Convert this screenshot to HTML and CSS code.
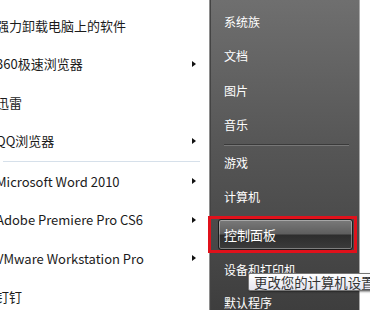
FILE: index.html
```html
<!DOCTYPE html>
<html>
<head>
    <title>开始菜单</title>
    <link rel="stylesheet" href="styles.css">
</head>
<body>
    <div class="start-menu">
        <div class="programs">
            <div class="prog-item"><span>强力卸载电脑上的软件</span></div>
            <div class="prog-item"><span>360极速浏览器</span><i class="arrow"></i></div>
            <div class="prog-item"><span>迅雷</span></div>
            <div class="prog-item"><span>QQ浏览器</span><i class="arrow"></i></div>
            <div class="prog-sep"></div>
            <div class="prog-item"><span>Microsoft Word 2010</span><i class="arrow"></i></div>
            <div class="prog-item"><span>Adobe Premiere Pro CS6</span><i class="arrow"></i></div>
            <div class="prog-item"><span>VMware Workstation Pro</span><i class="arrow"></i></div>
            <div class="prog-item"><span>钉钉</span></div>
        </div>

        <div class="places">
            <div class="place">系统族</div>
            <div class="place">文档</div>
            <div class="place">图片</div>
            <div class="place">音乐</div>
            <div class="place-sep"></div>
            <div class="place place-b">游戏</div>
            <div class="place place-b">计算机</div>
            <div class="mark">
                <div class="place-active">控制面板</div>
            </div>
            <div class="place place-c">设备和打印机</div>
            <div class="place place-c">默认程序</div>

            <div class="tooltip">更改您的计算机设置</div>
        </div>
    </div>
</body>
</html>
```

FILE: styles.css
```css
body {
    margin: 0;
    width: 370px;
    height: 310px;
    overflow: hidden;
    background-color: white;
    font-family: "Noto Sans CJK SC", "Microsoft YaHei", sans-serif;
    font-size: 12px;
}

.start-menu {
    display: flex;
    height: 310px;
}

/* left column: program list */
.programs {
    width: 209px;
    padding-top: 6px;
    box-sizing: border-box;
    background-color: white;
    color: #1b1b1b;
    font-size: 13px;
}

.prog-item {
    height: 38.5px;
    display: flex;
    align-items: center;
    justify-content: space-between;
    padding-right: 13px;
    margin-left: -4px;
    white-space: nowrap;
}

.arrow {
    width: 0;
    height: 0;
    border-left: 4px solid #111;
    border-top: 3.5px solid transparent;
    border-bottom: 3.5px solid transparent;
}

.prog-sep {
    height: 1px;
    margin: 1px 9px 0 3px;
    background-color: #d6e0ea;
}

/* right column: places */
.places {
    position: relative;
    width: 151px;
    padding-top: 4px;
    box-sizing: border-box;
    background: linear-gradient(#6f6f6f, #575757 45%, #3e3e3e);
    border-left: 1px solid #8e8e8e;
    border-right: 1px solid #a9a9a9;
    box-shadow: inset 1px 0 #434343;
    color: #ffffff;
}

.place {
    height: 34.5px;
    display: flex;
    align-items: center;
    padding-left: 14px;
    white-space: nowrap;
}

.place-c {
    height: 33px;
}

.place-sep {
    height: 1px;
    margin: 2px 10px 0 14px;
    background-color: #3a3a3a;
    border-bottom: 1px solid #777;
}

.place-sep + .place {
    height: 33px;
}

.mark {
    height: 37px;
    margin: 2px 2px 0 -2px;
    box-sizing: border-box;
    border: 3px solid #e0111b;
    padding-left: 7px;
    padding-right: 1px;
}

.place-active {
    height: 100%;
    box-sizing: border-box;
    display: flex;
    align-items: center;
    padding-left: 5px;
    border: 1px solid #1c1c1c;
    border-radius: 3px;
    background: linear-gradient(#7a7a7a, #5e5e5e 48%, #2d2d2d 52%, #3b3b3b);
    box-shadow: inset 0 0 0 1px rgba(255, 255, 255, 0.35);
    font-size: 13px;
}

.tooltip {
    position: absolute;
    left: 38px;
    top: 273px;
    height: 18px;
    padding: 0 6px 0 5px;
    box-sizing: border-box;
    display: flex;
    align-items: center;
    white-space: nowrap;
    font-size: 13.4px;
    color: #333333;
    background: linear-gradient(#ffffff, #e4e5f0);
    border: 1px solid #767676;
    border-radius: 2px;
    box-shadow: 1px 1px 2px rgba(0, 0, 0, 0.4);
}
```
